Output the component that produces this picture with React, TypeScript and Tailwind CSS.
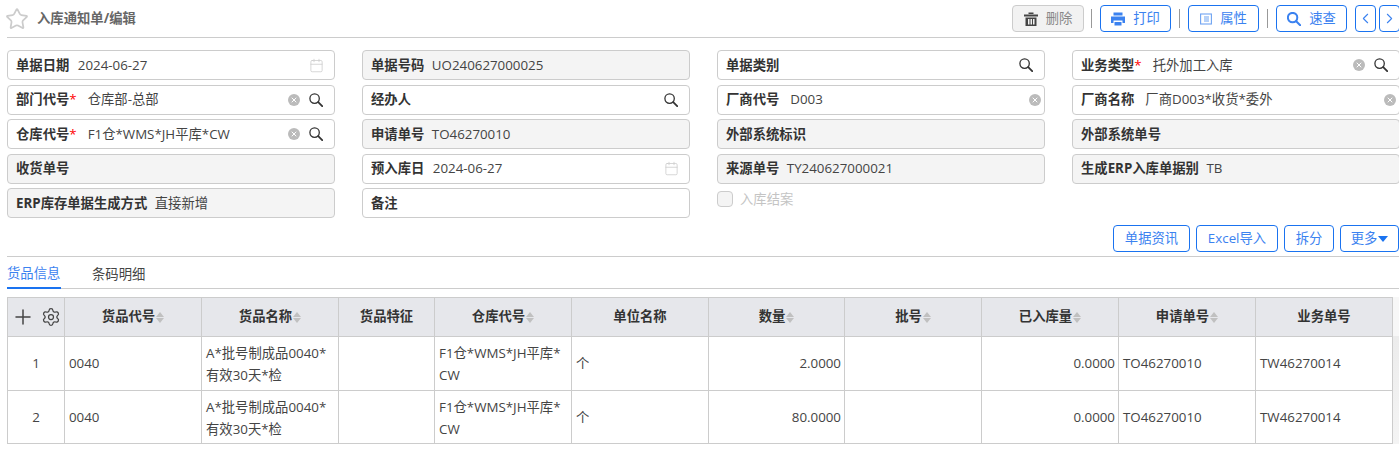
import { Calendar, Star, ChevronLeft, ChevronRight, Settings, Plus, X } from 'lucide-react'

const font = "font-['Open_Sans','Noto_Sans_CJK_SC',sans-serif]"

type Field = {
  label: string
  value?: string
  required?: boolean
  readOnly?: boolean
  clear?: boolean
  search?: boolean
  date?: boolean
}

const fields: (Field | null)[] = [
  { label: '单据日期', value: '2024-06-27', date: true },
  { label: '单据号码', value: 'UO240627000025', readOnly: true },
  { label: '单据类别', search: true },
  { label: '业务类型', value: '托外加工入库', required: true, clear: true, search: true },
  { label: '部门代号', value: '仓库部-总部', required: true, clear: true, search: true },
  { label: '经办人', search: true },
  { label: '厂商代号', value: 'D003', clear: true },
  { label: '厂商名称', value: '厂商D003*收货*委外', clear: true },
  { label: '仓库代号', value: 'F1仓*WMS*JH平库*CW', required: true, clear: true, search: true },
  { label: '申请单号', value: 'TO46270010', readOnly: true },
  { label: '外部系统标识', readOnly: true },
  { label: '外部系统单号', readOnly: true },
  { label: '收货单号', readOnly: true },
  { label: '预入库日', value: '2024-06-27', date: true },
  { label: '来源单号', value: 'TY240627000021', readOnly: true },
  { label: '生成ERP入库单据别', value: 'TB', readOnly: true },
  { label: 'ERP库存单据生成方式', value: '直接新增', readOnly: true },
  { label: '备注' },
  null,
  null,
]

const columns = [
  { title: '货品代号', w: 'w-[137px]', sort: true },
  { title: '货品名称', w: 'w-[137px]', sort: true },
  { title: '货品特征', w: 'w-[96px]' },
  { title: '仓库代号', w: 'w-[137px]', sort: true },
  { title: '单位名称', w: 'w-[137px]' },
  { title: '数量', w: 'w-[136px]', sort: true },
  { title: '批号', w: 'w-[137px]', sort: true },
  { title: '已入库量', w: 'w-[137px]', sort: true },
  { title: '申请单号', w: 'w-[137px]', sort: true },
  { title: '业务单号', w: 'w-[137px]' },
]

const rows = [
  { no: 1, qty: '2.0000', h: 'h-[54px]' },
  { no: 2, qty: '80.0000', h: 'h-[52px] [&>div]:pt-[2px]' },
]

function SearchIcon({ className = '', thick = false }: { className?: string; thick?: boolean }) {
  return (
    <svg viewBox="0 0 14 14" className={className} fill="none" stroke="currentColor" strokeLinecap="round">
      <circle cx="5.6" cy="5.6" r="4.7" strokeWidth={thick ? 2 : 1.3} />
      <path d="M9.2 9.2 13.2 13.2" strokeWidth={thick ? 2 : 1.8} />
    </svg>
  )
}

function ClearIcon() {
  return (
    <span className="flex h-3 w-3 items-center justify-center rounded-full bg-[#bbbbbb]">
      <X className="h-2 w-2 text-white" strokeWidth={3} />
    </span>
  )
}

function FormField({ field }: { field: Field }) {
  const pad = field.search ? 'pr-[11px]' : field.clear ? 'pr-[3px]' : 'pr-[10px]'
  const gap = field.clear ? 'ml-[11px]' : field.readOnly ? 'ml-[7.5px]' : 'ml-[8.5px]'
  return (
    <div
      className={`flex h-[30px] items-center rounded border border-[#cccccc] pl-2 text-[13.33px] ${pad} ${
        field.readOnly ? 'bg-[#f4f4f4]' : 'bg-white'
      }`}
    >
      <span className="mt-px font-bold whitespace-nowrap text-[#333333]">{field.label}</span>
      {field.required && <span className="mt-px text-[#ff0000]">*</span>}
      {field.value && <span className={`mt-px whitespace-nowrap text-[#444444] ${gap}`}>{field.value}</span>}
      <span className="ml-auto flex items-center gap-[9px]">
        {field.clear && <ClearIcon />}
        {field.search && <SearchIcon className="h-[14px] w-[14px] text-[#333333]" />}
        {field.date && <Calendar className="h-[15px] w-[15px] text-[#cccccc]" strokeWidth={1.25} />}
      </span>
    </div>
  )
}

function SortIcon() {
  return (
    <span className="ml-px inline-flex flex-col gap-px align-middle">
      <span className="h-0 w-0 border-x-[4px] border-b-[5px] border-x-transparent border-b-[#c0c0c0]" />
      <span className="h-0 w-0 border-x-[4px] border-t-[5px] border-x-transparent border-t-[#c0c0c0]" />
    </span>
  )
}

function Divider() {
  return <span className="h-[19px] w-px bg-[#999999]" />
}

function ToolButton({ icon, label }: { icon: React.ReactNode; label: string }) {
  return (
    <button className="flex h-[27px] w-[71px] items-center justify-center gap-2 rounded-sm border border-[#1a73f0] bg-white text-[13.33px] text-[#3b82f0]">
      {icon}
      {label}
    </button>
  )
}

function SmallButton({ label, w }: { label: string; w: string }) {
  return (
    <button className={`flex h-[27px] items-center justify-center rounded-sm border border-[#1a73f0] bg-white text-[13.33px] text-[#3b82f0] ${w}`}>
      {label}
    </button>
  )
}

export default function App() {
  return (
    <div className={`h-[450px] w-[1399px] overflow-hidden bg-white ${font}`}>
      {/* Title bar */}
      <div className="ml-[7px] flex h-[38px] items-center justify-between border-b border-[#cccccc]">
        <div className="-ml-[2px] flex items-center gap-[8px]">
          <Star className="h-6 w-6 text-[#cccccc]" strokeWidth={1.75} />
          <span className="text-[13.33px] font-bold text-[#666666]">入库通知单/编辑</span>
        </div>
        <div className="-mr-px flex items-center gap-2">
          <button className="-mr-px flex h-[27px] w-[72px] items-center justify-center gap-2 rounded-sm border border-[#cccccc] bg-[#f2f2f2] text-[13.33px] text-[#888888]">
            <svg viewBox="0 0 14 14" className="h-[14px] w-[14px] text-[#444444]" fill="currentColor">
              <rect x="0" y="2.5" width="14" height="2" />
              <rect x="4.5" y="0.5" width="5" height="1.5" />
              <path d="M1.5 5.5h11V14h-11zM4 7v5.5h1.5V7zm2.5 0v5.5h1.5V7zM9 7v5.5h1.5V7z" fillRule="evenodd" />
            </svg>
            删除
          </button>
          <Divider />
          <ToolButton
            icon={
              <svg viewBox="0 0 14 14" className="h-[14px] w-[14px]" fill="currentColor">
                <rect x="2.5" y="0.5" width="9" height="3" />
                <path d="M0 4.5h14V11h-2.5V8.5h-9V11H0z" />
                <rect x="3.5" y="10" width="7" height="3.5" />
              </svg>
            }
            label="打印"
          />
          <Divider />
          <ToolButton
            icon={
              <svg viewBox="0 0 12 12" className="h-3 w-3 text-[#6ea3f2]" fill="none" stroke="currentColor" strokeWidth="1.1">
                <rect x="0.6" y="1" width="10.8" height="10" />
                <path d="M4 4h5M4 6h5M4 8h5" />
              </svg>
            }
            label="属性"
          />
          <Divider />
          <ToolButton icon={<SearchIcon thick className="h-[14px] w-[14px]" />} label="速查" />
          <div className="flex gap-[3px]">
            <button className="flex h-[27px] w-[21px] items-center justify-center rounded-sm border border-[#1a73f0] text-[#3b82f0]">
              <ChevronLeft className="h-[17px] w-[17px]" strokeWidth={1.5} />
            </button>
            <button className="flex h-[27px] w-[21px] items-center justify-center rounded-sm border border-[#1a73f0] text-[#3b82f0]">
              <ChevronRight className="h-[17px] w-[17px]" strokeWidth={1.5} />
            </button>
          </div>
        </div>
      </div>

      {/* Form */}
      <div className="mt-3 ml-[7px] grid w-[1393px] grid-cols-4 gap-x-[27px] gap-y-[4.5px]">
        {fields.map((f, i) => {
          if (f) return <FormField key={i} field={f} />
          if (i === 18) {
            return (
              <div key={i} className="flex h-[30px] items-start gap-[7px] pt-[3px] text-[13.33px] text-[#c4c4c4]">
                <span className="h-4 w-4 rounded-sm border border-[#cccccc] bg-[#f4f4f4]" />
                <span className="-mt-px">入库结案</span>
              </div>
            )
          }
          return <div key={i} />
        })}
      </div>

      {/* Detail actions */}
      <div className="flex items-center justify-end gap-[6px] pt-[7px]">
        <SmallButton label="单据资讯" w="w-[77px]" />
        <SmallButton label="Excel导入" w="w-[82px]" />
        <SmallButton label="拆分" w="w-[50px]" />
        <button className="flex h-[27px] w-[59px] items-center justify-center gap-px rounded-sm border border-[#1a73f0] text-[13.33px] text-[#3b82f0]">
          更多
          <span className="h-0 w-0 border-x-[5px] border-t-[6px] border-x-transparent border-t-[#1a73f0]" />
        </button>
      </div>

      {/* Tabs */}
      <div className="mt-[4px] ml-[7px] flex h-[33px] gap-[31px] border-y border-[#cccccc] text-[13.33px]">
        <span className="flex h-[32px] w-[54px] items-center border-b-2 border-[#1a73f0] pt-[3px] whitespace-nowrap text-[#3b82f0]">货品信息</span>
        <span className="flex h-[32px] items-center pt-[3px] text-[#444444]">条码明细</span>
      </div>

      {/* Table with the page scrollbar edge beside it */}
      <div className="mt-[8px] ml-[7px] flex items-stretch">
        <div className="flex w-[1386px] shrink-0 flex-col border-y border-l border-[#cccccc] text-[13.33px] text-[#444444]">
          <div className="flex h-[39px] border-b border-[#cccccc] bg-[#e6e7eb]">
            <div className="flex w-[57px] items-center gap-[6px] border-r border-[#cccccc] pl-[3px]">
              <Plus className="h-6 w-6 text-[#444444]" strokeWidth={1.5} />
              <Settings className="h-5 w-5 text-[#444444]" strokeWidth={1.5} />
            </div>
            {columns.map(c => (
              <div key={c.title} className={`flex items-center justify-center border-r border-[#cccccc] font-bold text-[#333333] ${c.w}`}>
                {c.title}
                {c.sort && <SortIcon />}
              </div>
            ))}
          </div>
          {rows.map(r => (
            <div key={r.no} className={`flex border-b border-[#cccccc] last:border-b-0 ${r.h}`}>
              <div className="flex w-[57px] items-center justify-center border-r border-[#cccccc]">{r.no}</div>
              <div className="flex w-[137px] items-center border-r border-[#cccccc] pr-[3px] pl-1">0040</div>
              <div className="flex w-[137px] items-center border-r border-[#cccccc] pr-[3px] pl-1 leading-[22px]">
                <span>A*批号制成品0040*<wbr />有效30天*检</span>
              </div>
              <div className="w-[96px] border-r border-[#cccccc]" />
              <div className="flex w-[137px] items-center border-r border-[#cccccc] pr-[3px] pl-1 leading-[22px]">
                <span>F1仓*WMS*JH平库*<wbr />CW</span>
              </div>
              <div className="flex w-[137px] items-center border-r border-[#cccccc] pr-[3px] pl-1">个</div>
              <div className="flex w-[136px] items-center justify-end border-r border-[#cccccc] pr-[3px] pl-1">{r.qty}</div>
              <div className="w-[137px] border-r border-[#cccccc]" />
              <div className="flex w-[137px] items-center justify-end border-r border-[#cccccc] pr-[3px] pl-1">0.0000</div>
              <div className="flex w-[137px] items-center border-r border-[#cccccc] pr-[3px] pl-1">TO46270010</div>
              <div className="flex w-[137px] items-center border-r border-[#cccccc] pr-[3px] pl-1">TW46270014</div>
            </div>
          ))}
        </div>
        <div className="flex w-[6px] flex-col">
          <div className="h-[39px] bg-[#f7f7f7]" />
          <div className="flex-1 bg-gradient-to-b from-[#ececec] to-[#f4f4f4]" />
        </div>
      </div>
    </div>
  )
}
